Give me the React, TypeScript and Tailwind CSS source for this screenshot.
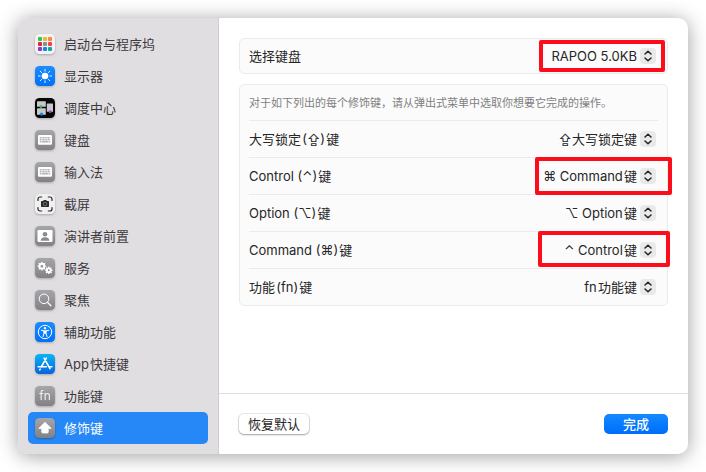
import type { ReactNode } from "react";
import clsx from "clsx";

function Tile({ fill, children }: { fill: string; children: ReactNode }) {
  return (
    <svg viewBox="0 0 20 20" className="size-5 shrink-0 overflow-visible drop-shadow-[0_1px_1px_rgba(0,0,0,0.25)]" aria-hidden="true">
      <rect width="20" height="20" rx="4.6" fill={fill} />
      {children}
    </svg>
  );
}

function LaunchpadIcon() {
  const colors = ["#2bc653", "#f7b52c", "#fb8a2a", "#e0263c", "#8b8f93", "#fb3b5c", "#8a3bc4", "#1287e8", "#12a992"];
  return (
    <Tile fill="#f3f2f3">
      {colors.map((color, i) => (
        <rect key={color} x={3 + (i % 3) * 5} y={3 + Math.floor(i / 3) * 5} width="4" height="4" rx="0.9" fill={color} />
      ))}
    </Tile>
  );
}

function DisplayIcon() {
  return (
    <Tile fill="url(#blue)">
      <circle cx="10" cy="10" r="3.3" fill="#fff" />
      {[0, 45, 90, 135, 180, 225, 270, 315].map((angle) => (
        <path key={angle} d="M10 3.4v1.7" stroke="#fff" strokeWidth="0.9" strokeLinecap="round" transform={`rotate(${angle} 10 10)`} />
      ))}
    </Tile>
  );
}

function MissionControlIcon() {
  return (
    <Tile fill="#050505">
      <rect x="2" y="3.2" width="8.8" height="5.6" rx="0.6" fill="#c9c7ca" />
      <rect x="2" y="10.2" width="8.8" height="6.6" rx="0.6" fill="#c9c7ca" />
      <rect x="11.8" y="5.4" width="6.2" height="8.4" rx="0.6" fill="#c9c7ca" />
      <circle cx="6" cy="8.7" r="1.4" fill="#1fc44c" />
      <circle cx="6.5" cy="16.1" r="1.6" fill="#1583ea" />
      <circle cx="15.2" cy="13.7" r="1.4" fill="#9a4ad0" />
    </Tile>
  );
}

function KeyboardIcon() {
  return (
    <Tile fill="url(#gray)">
      <rect x="3" y="5.1" width="14" height="9.6" rx="1.2" fill="#fff" />
      <path d="M4.8 7.8h10.4M4.8 9.7h10.4" stroke="#b4b3b7" strokeWidth="1.5" strokeDasharray="1.2 0.4" />
      <path d="M4.8 11.7H6M6.6 11.7h6.8M14 11.7h1.2" stroke="#b4b3b7" strokeWidth="1.5" />
    </Tile>
  );
}

function ScreenshotIcon() {
  return (
    <Tile fill="#f1f0f1">
      <path d="M3 6.5V5a2 2 0 0 1 2-2h1.7M13.3 3H15a2 2 0 0 1 2 2v1.5M17 13.5V15a2 2 0 0 1-2 2h-1.7M6.7 17H5a2 2 0 0 1-2-2v-1.5" fill="none" stroke="#262626" strokeWidth="1.2" strokeLinecap="round" />
      <path d="M6.8 7h1.3l.8-1h2.2l.8 1h1.3q.8 0 .8.8v4.4q0 .8-.8.8H6.8q-.8 0-.8-.8V7.8q0-.8.8-.8Z" fill="#262626" />
      <circle cx="10" cy="10" r="1.8" fill="none" stroke="#a5a5a5" strokeWidth="0.6" />
    </Tile>
  );
}

function PresenterIcon() {
  return (
    <Tile fill="url(#gray)">
      <rect x="2.5" y="4" width="15" height="12" rx="1.2" fill="#fff" />
      <circle cx="10" cy="8.2" r="2.3" fill="#8b8a8e" />
      <path d="M5.6 14.7c.2-2.4 1.8-3.5 4.4-3.5s4.2 1.1 4.4 3.5Z" fill="#8b8a8e" />
    </Tile>
  );
}

function Gear({ x, y, r }: { x: number; y: number; r: number }) {
  return (
    <g transform={`translate(${x} ${y})`}>
      <circle r={r} fill="none" stroke="#fff" strokeWidth="1.9" />
      {[0, 45, 90, 135, 180, 225, 270, 315].map((angle) => (
        <path key={angle} d={`M0 ${-r - 0.5}v-1.4`} stroke="#fff" strokeWidth="1.3" transform={`rotate(${angle})`} />
      ))}
    </g>
  );
}

function ServicesIcon() {
  return (
    <Tile fill="url(#gray)">
      <Gear x={6.9} y={8.2} r={2.4} />
      <Gear x={13.8} y={12.3} r={1.9} />
    </Tile>
  );
}

function SpotlightIcon() {
  return (
    <Tile fill="url(#gray)">
      <circle cx="9" cy="8.8" r="4.8" fill="none" stroke="#fff" strokeWidth="1" />
      <path d="m12.6 12.4 3.3 3.3" stroke="#fff" strokeWidth="1.3" strokeLinecap="round" />
    </Tile>
  );
}

function AccessibilityIcon() {
  return (
    <Tile fill="url(#blue)">
      <circle cx="10" cy="10" r="6.7" fill="none" stroke="#fff" strokeWidth="1" />
      <circle cx="10" cy="6.2" r="1.2" fill="#fff" />
      <path d="M6.3 8.3 9 8.9v2.3L8 14.6M13.7 8.3 11 8.9v2.3l1 3.4" fill="none" stroke="#fff" strokeWidth="1" strokeLinecap="round" strokeLinejoin="round" />
      <path d="M8.7 8.4h2.6v3.3H8.7Z" fill="#fff" />
    </Tile>
  );
}

function AppStoreIcon() {
  return (
    <Tile fill="url(#store)">
      <path d="M11.3 4.2 6.2 13M9.1 4.2l5.9 10.4M3.2 12.8h8.2M14.3 12.8h2.6M5.2 15.1l-.5.8" fill="none" stroke="#fff" strokeWidth="1.6" strokeLinecap="round" />
    </Tile>
  );
}

function FnIcon() {
  return (
    <Tile fill="url(#gray)">
      <text x="10" y="14" textAnchor="middle" fontSize="12" fill="#f1f1f1">fn</text>
    </Tile>
  );
}

function ModifierIcon() {
  return (
    <Tile fill="url(#gray)">
      <path d="M10 4.3 16.2 10.4H13.2v3.8q0 .8-.8.8H7.6q-.8 0-.8-.8v-3.8H3.8Z" fill="#fff" stroke="#fff" strokeWidth="0.8" strokeLinejoin="round" />
    </Tile>
  );
}

function Gradients() {
  return (
    <svg className="absolute size-0" aria-hidden="true">
      <defs>
        <linearGradient id="gray" x1="0" y1="0" x2="0" y2="1">
          <stop stopColor="#a6a5a9" />
          <stop offset="1" stopColor="#828186" />
        </linearGradient>
        <linearGradient id="blue" x1="0" y1="0" x2="0" y2="1">
          <stop stopColor="#1a8dff" />
          <stop offset="1" stopColor="#0070f8" />
        </linearGradient>
        <linearGradient id="store" x1="0" y1="0" x2="0" y2="1">
          <stop stopColor="#08b4f5" />
          <stop offset="1" stopColor="#0a62e0" />
        </linearGradient>
      </defs>
    </svg>
  );
}

const sections = [
  { name: "启动台与程序坞", icon: <LaunchpadIcon /> },
  { name: "显示器", icon: <DisplayIcon /> },
  { name: "调度中心", icon: <MissionControlIcon /> },
  { name: "键盘", icon: <KeyboardIcon /> },
  { name: "输入法", icon: <KeyboardIcon /> },
  { name: "截屏", icon: <ScreenshotIcon /> },
  { name: "演讲者前置", icon: <PresenterIcon /> },
  { name: "服务", icon: <ServicesIcon /> },
  { name: "聚焦", icon: <SpotlightIcon /> },
  { name: "辅助功能", icon: <AccessibilityIcon /> },
  { name: "App\u200a快捷键", icon: <AppStoreIcon /> },
  { name: "功能键", icon: <FnIcon /> },
  { name: "修饰键", icon: <ModifierIcon />, active: true },
];

const keys = [
  { id: "caps", label: "大写锁定\u200a(⇪)\u200a键", value: "⇪大写锁定键" },
  { id: "control", label: "Control (⌃)\u200a键", value: "⌘ Command\u200a键", mark: "-inset-y-px -right-3.5 w-[137px]" },
  { id: "option", label: "Option (⌥)\u200a键", value: "⌥ Option\u200a键" },
  { id: "command", label: "Command (⌘)\u200a键", value: "⌃ Control\u200a键", mark: "-top-px bottom-px -right-3 w-[132px]" },
  { id: "fn", label: "功能\u200a(fn)\u200a键", value: "fn\u200a功能键" },
];

function Popup({ id, value }: { id: string; value: string }) {
  return (
    <div className="relative flex items-center">
      <select id={id} defaultValue={value} className="h-6 appearance-none bg-transparent pr-[19px] [text-align-last:right] outline-none">
        <option>{value}</option>
      </select>
      <span className="pointer-events-none absolute right-0 flex size-4 items-center justify-center rounded bg-[#e9e9e9]">
        <svg viewBox="0 0 16 16" className="size-4" fill="none" stroke="#222" strokeWidth="1.5" strokeLinecap="round" strokeLinejoin="round" aria-hidden="true">
          <path d="M5 6 8 3.2 11 6M5 10l3 2.8L11 10" />
        </svg>
      </span>
    </div>
  );
}

function Mark({ className }: { className: string }) {
  return <span className={clsx("pointer-events-none absolute z-10 rounded-xs border-4 border-[#fc0d1b]", className)} />;
}

export default function App() {
  return (
    <div className="flex min-h-screen bg-white p-[18px] font-['Inter','Noto_Sans_CJK_SC',sans-serif] text-[13px] leading-5 text-[#262626]">
      <Gradients />
      <div className="flex flex-1 overflow-hidden rounded-[10px] bg-white shadow-[0_2px_20px_rgba(0,0,0,0.38)]">
        <nav className="w-[201px] shrink-0 border-r border-[#cfccd0] bg-[#e1dee2] p-2.5">
          {sections.map(({ name, icon, active }) => (
            <a
              key={name}
              href="#"
              className={clsx("flex h-8 items-center gap-[9px] rounded-[5px] px-[7px]", active ? "bg-[#2688f7] text-white" : "text-[#3b393c]")}
            >
              {icon}
              {name}
            </a>
          ))}
        </nav>

        <main className="flex min-w-0 flex-1 flex-col">
          <div className="flex flex-1 flex-col gap-2.5 p-5">
            <div className="relative flex h-9 items-center justify-between rounded-[5px] border border-[#ebebeb] bg-[#fbfbfb] pr-[11px] pl-[9px]">
              <label htmlFor="keyboard">选择键盘</label>
              <Popup id="keyboard" value="RAPOO 5.0KB" />
              <Mark className="top-px right-0.5 h-8 w-[126px]" />
            </div>

            <div className="rounded-[5px] border border-[#ebebeb] bg-[#fbfbfb] px-[9px]">
              <p className="flex h-[35px] items-center text-[11px] text-[#808080]">
                对于如下列出的每个修饰键，请从弹出式菜单中选取你想要它完成的操作。
              </p>
              {keys.map(({ id, label, value, mark }) => (
                <div key={id} className="relative flex h-[37px] items-center justify-between border-t border-[#ebebeb] pr-0.5">
                  <label htmlFor={id}>{label}</label>
                  <Popup id={id} value={value} />
                  {mark && <Mark className={mark} />}
                </div>
              ))}
            </div>
          </div>

          <footer className="flex h-[61px] items-center justify-between border-t border-[#dedede] px-5">
            <button className="h-5 rounded-[5px] bg-white px-[9px] shadow-[0_0_0_1px_rgba(0,0,0,0.08),0_1px_2px_rgba(0,0,0,0.3)]">恢复默认</button>
            <button className="h-5 w-16 rounded-[5px] bg-linear-to-b from-[#1589ff] to-[#006cfa] font-medium text-white">完成</button>
          </footer>
        </main>
      </div>
    </div>
  );
}
